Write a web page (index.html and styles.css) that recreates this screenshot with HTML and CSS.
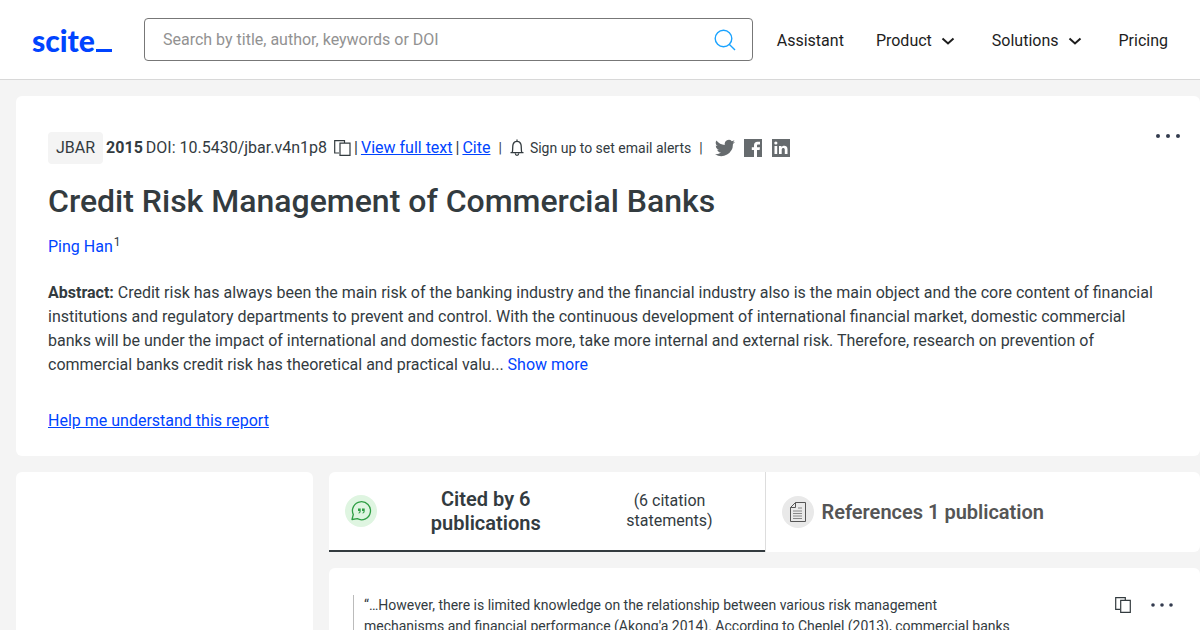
FILE: index.html
```html
<!DOCTYPE html>
<html lang="en">
<head>
<meta charset="utf-8">
<title>Credit Risk Management of Commercial Banks - scite</title>
<link rel="stylesheet" href="styles.css">
</head>
<body>
<header class="header">
  <a class="logo" href="#">scite<span class="logo-bar"></span></a>
  <form class="search">
    <input class="search-input" type="text" aria-label="Search" placeholder="Search by title, author, keywords or DOI">
    <button class="icon-button" type="button" aria-label="Search">
      <svg width="22" height="22" viewBox="0 0 22 22" fill="none" stroke="#1aa3ff" stroke-width="1.4"><circle cx="9.5" cy="9.5" r="8.3"/><path d="M15.2 15.2L21 21"/></svg>
    </button>
  </form>
  <nav class="nav">
    <a href="#">Assistant</a>
    <button type="button">Product <svg width="16" height="10" viewBox="0 0 16 10" fill="none" stroke="#1d1d1d" stroke-width="2"><path d="M2.5 2.5L8 7.5L13.5 2.5"/></svg></button>
    <button type="button">Solutions <svg width="16" height="10" viewBox="0 0 16 10" fill="none" stroke="#1d1d1d" stroke-width="2"><path d="M2.5 2.5L8 7.5L13.5 2.5"/></svg></button>
    <a href="#">Pricing</a>
  </nav>
</header>
<main class="page">
  <article class="card paper">
    <div class="paper-top">
      <div class="meta">
        <span class="journal">JBAR</span>
        <strong>2015</strong>
        <span>DOI: 10.5430/jbar.v4n1p8</span>
        <button class="icon-button copy" type="button" aria-label="Copy DOI">
          <svg width="17" height="16" viewBox="0 0 17 16" fill="none" stroke="#333b3f" stroke-width="1.2"><path d="M5 13H.7V.7H10.500V3"/><path d="M6 3.200H16V15.300H6Z"/></svg>
        </button>
        <span>|</span>
        <a class="link" href="#">View full text</a>
        <span>|</span>
        <a class="link" href="#">Cite</a>
        <span class="divider">|</span>
        <button class="alerts" type="button">
          <svg width="14" height="18" viewBox="0 0 14 18" fill="none" stroke="#333b3f" stroke-width="1.3"><path d="M.5 13.700H13.500M2.200 13.500C3.100 11 2.300 7.500 3.100 5.200C3.800 3.300 5.200 2.400 7 2.400S10.200 3.300 10.900 5.200C11.700 7.500 10.900 11 11.800 13.500M7 .5V2.400M5.300 14.500C5.500 17 8.500 17 8.700 14.500"/></svg>
          Sign up to set email alerts
        </button>
        <span class="divider">|</span>
        <span class="social">
          <a href="#" aria-label="Twitter"><svg width="20" height="20" viewBox="0 0 24 24" fill="#666b6e"><path d="M24 4.600a10 10 0 0 1-2.800.8 5 5 0 0 0 2.100-2.700 10 10 0 0 1-3.100 1.200 4.900 4.900 0 0 0-8.400 4.500A14 14 0 0 1 1.700 3.100a4.900 4.900 0 0 0 1.500 6.600 5 5 0 0 1-2.200-.6 4.900 4.900 0 0 0 3.900 4.900 5 5 0 0 1-2.200.1 4.900 4.900 0 0 0 4.600 3.400A9.900 9.900 0 0 1 0 19.500a14 14 0 0 0 21.500-12.400A10 10 0 0 0 24 4.600z"/></svg></a>
          <a href="#" aria-label="Facebook"><svg width="20" height="20" viewBox="0 0 20 20"><path d="M1 1H19V19H1Z" fill="#666b6e"/><path d="M11 19V12H8.800V9.200H11V7.300C11 5 12.300 3.800 14.400 3.800H17V6.600H15.400C14.300 6.600 14 7 14 8V9.200H17L16.600 12H14V19Z" fill="#fff"/></svg></a>
          <a href="#" aria-label="LinkedIn"><svg width="20" height="20" viewBox="0 0 20 20"><path d="M1 1H19V19H1Z" fill="#666b6e"/><path d="M3.500 8H6.200V16H3.500ZM8 8H10.500V9.200C12 7 16.500 7.200 16.500 11.200V16H13.800V11.800C13.800 9.300 10.700 9.400 10.700 11.800V16H8Z" fill="#fff"/><circle cx="4.850" cy="5" r="1.600" fill="#fff"/></svg></a>
        </span>
      </div>
      <button class="icon-button" type="button" aria-label="More options"><svg width="24" height="8" viewBox="0 0 24 8" fill="#333b4f"><circle cx="2" cy="4" r="2"/><circle cx="12" cy="4" r="2"/><circle cx="22" cy="4" r="2"/></svg></button>
    </div>
    <h1 class="title">Credit Risk Management of Commercial Banks</h1>
    <p class="authors"><a href="#">Ping Han</a><sup>1</sup></p>
    <p class="abstract"><strong>Abstract:</strong> Credit risk has always been the main risk of the banking industry and the financial industry also is the main object and the core content of financial<br>institutions and regulatory departments to prevent and control. With the continuous development of international financial market, domestic commercial<br>banks will be under the impact of international and domestic factors more, take more internal and external risk. Therefore, research on prevention of<br>commercial banks credit risk has theoretical and practical valu... <a href="#">Show more</a></p>
    <a class="link" href="#">Help me understand this report</a>
  </article>
  <div class="columns">
    <aside class="card"></aside>
    <section class="results">
      <div class="card tabs">
        <button class="tab tab-active" type="button">
          <svg width="32" height="32" viewBox="0 0 32 32" fill="none"><circle cx="16" cy="16" r="16" fill="#dff5e1"/><path d="M7 24.500L8.300 19.500A9 9 0 1 1 12.300 23.700Z" stroke="#2f9e44" stroke-width="1.300" stroke-linejoin="round"/><path d="M13 13.500H15.700V16C15.700 17.500 15 18.300 13.500 18.600V17.700C14.200 17.500 14.500 17 14.500 16H13ZM17 13.500H19.700V16C19.700 17.500 19 18.300 17.500 18.600V17.700C18.200 17.500 18.500 17 18.500 16H17Z" fill="#2f9e44"/></svg>
          <span class="tab-title">Cited by 6<br>publications</span>
          <span class="tab-count">(6 citation<br>statements)</span>
        </button>
        <button class="tab tab-references" type="button">
          <svg width="32" height="32" viewBox="0 0 32 32" fill="none" stroke="#555"><circle cx="16" cy="16" r="16" fill="#e9e9e9" stroke="none"/><path d="M13.500 6.500H23.500V25.500H8.500V11.500ZM8.500 11.500H13.500V6.500"/><path d="M16 12H20M11 15H20M11 17.500H20M11 20H20M11 22.500H20" stroke="#888"/></svg>
          <span>References 1 publication</span>
        </button>
      </div>
      <article class="card citation">
        <blockquote class="quote">“…However, there is limited knowledge on the relationship between various risk management<br>mechanisms and financial performance (Akong'a 2014). According to Cheplel (2013), commercial banks</blockquote>
        <div class="actions">
          <button class="icon-button" type="button" aria-label="Copy citation"><svg width="16" height="16" viewBox="0 0 16 16" fill="none" stroke="#333b3f" stroke-width="1.200"><path d="M5 12.400H.7V.7H10.300V3"/><path d="M5.700 3.300H15.300V15.300H5.700Z"/></svg></button>
          <button class="icon-button" type="button" aria-label="More options"><svg width="22" height="4" viewBox="0 0 22 4" fill="#333b4f"><circle cx="2" cy="2" r="1.800"/><circle cx="11" cy="2" r="1.800"/><circle cx="20" cy="2" r="1.800"/></svg></button>
        </div>
      </article>
    </section>
  </div>
</main>
</body>
</html>
```
FILE: styles.css
```css
* { box-sizing: border-box; }
html { overflow-x: hidden; scrollbar-width: none; }
body {
  margin: 0;
  background: #f4f4f4;
  color: #333b3f;
  font: 16px/24px Roboto, "Liberation Sans", sans-serif;
}
button, input { font: inherit; color: inherit; }
button { padding: 0; border: 0; background: none; cursor: pointer; }
a { color: #0044ff; text-decoration: none; }
svg { display: block; flex: none; }
.header {
  display: flex;
  align-items: center;
  height: 80px;
  padding: 0 32px;
  background: #fff;
  border-bottom: 1px solid #d8d8d8;
}
.logo {
  display: flex;
  align-items: baseline;
  gap: 1px;
  width: 80px;
  margin-right: 32px;
  font: 900 30px/34px Lato, sans-serif;
}
.logo-bar { flex: none; width: 16px; height: 3px; margin-bottom: -3px; background: #0044ff; }
.search {
  display: flex;
  align-items: center;
  flex: 1;
  height: 43px;
  margin-right: 24px;
  padding: 0 16px 0 18px;
  border: 1px solid #777;
  border-radius: 4px;
}
.search-input { flex: 1; min-width: 0; padding: 0; border: 0; outline: 0; background: none; }
.search-input::placeholder { color: #929292; opacity: 1; }
.icon-button { display: flex; }
.nav { display: flex; gap: 32px; padding-top: 2px; white-space: nowrap; }
.nav a, .nav button { color: #1d1d1d; }
.nav button { display: flex; align-items: center; gap: 8px; padding-right: 4px; }
.page { display: flex; flex-direction: column; gap: 16px; padding: 16px 0 0 16px; }
.card { background: #fff; border-radius: 6px; }
.paper { padding: 36px 20px 23px 32px; }
.paper-top { display: flex; justify-content: space-between; align-items: flex-start; }
.meta { display: flex; align-items: center; gap: 3px; white-space: nowrap; }
.journal { padding: 4px 8px; background: #f4f4f4; border-radius: 4px; }
.copy { margin-left: 4px; }
.link { text-decoration: underline; }
.divider { margin: 0 5px; font-size: 14px; }
.alerts { display: flex; align-items: center; gap: 6px; font-size: 14px; }
.social { display: flex; gap: 8px; margin-left: 4px; }
.title { margin: 16px 0 13px; font-size: 32px; line-height: 42px; font-weight: 500; }
.authors { margin: 0 0 22px; }
sup { font-size: 12px; line-height: 12px; margin-left: 1px; }
.abstract { margin: 0 0 32px; }
.columns { display: grid; grid-template-columns: 297px 1fr; gap: 16px; }
.results { display: flex; flex-direction: column; gap: 16px; }
.tabs { display: grid; grid-template-columns: 1fr 1fr; height: 80px; border-bottom-left-radius: 0; overflow: hidden; }
.tab { display: flex; align-items: center; padding: 0 16px; }
.tab-active { padding-right: 20px; border-bottom: 2px solid #333b3f; }
.tab-title { flex: 1; font-size: 20px; font-weight: 600; }
.tab-count { width: 150px; line-height: 20px; }
.tab-references { gap: 8px; border-left: 1px solid #ddd; color: #555; font-size: 20px; font-weight: 600; }
.citation { display: flex; justify-content: space-between; padding: 27px 27px 24px 24px; }
.quote { margin: 0; padding-left: 10px; border-left: 1px solid #bbb; font-size: 14px; line-height: 21px; }
.actions { display: flex; align-items: center; gap: 20px; height: 20px; }
```
